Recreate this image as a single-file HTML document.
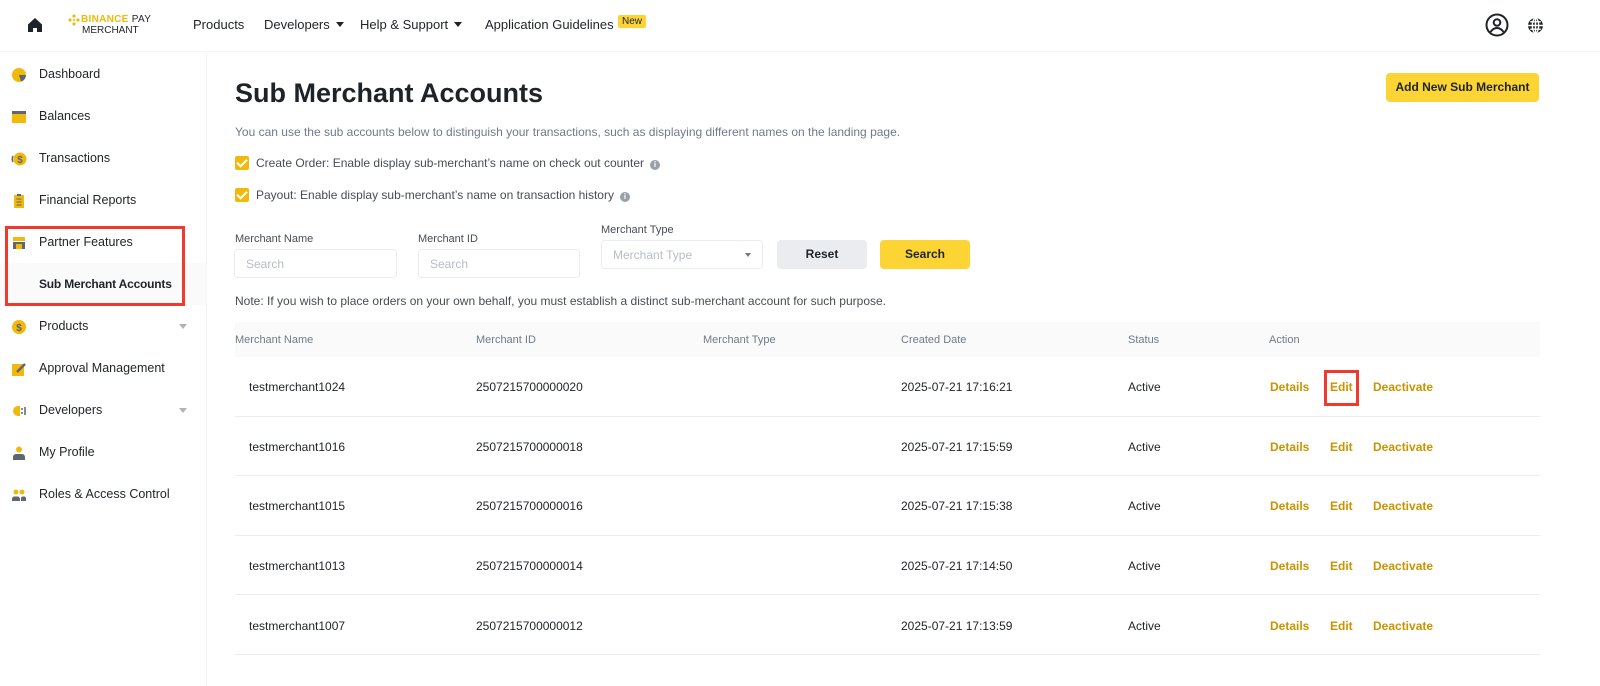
<!DOCTYPE html>
<html><head><meta charset="utf-8"><style>
*{box-sizing:border-box;margin:0;padding:0}
body{width:1600px;height:686px;overflow:hidden;background:#fff;font-family:"Liberation Sans",sans-serif;color:#1e2329;position:relative}
.abs{position:absolute}
.top{position:absolute;left:0;top:0;width:1600px;height:52px;border-bottom:1px solid #f2f3f5}
.nav{font-size:13px;color:#1e2329;top:17px;position:absolute}
.tri{display:inline-block;width:0;height:0;border-left:4px solid transparent;border-right:4px solid transparent;border-top:5px solid #1e2329;margin-left:6px;vertical-align:2px}
.side{position:absolute;left:0;top:53px;width:207px;height:633px;border-right:1px solid #f2f3f5}
.si{position:absolute;left:39px;font-size:12.5px;color:#1e2329}
.ic{position:absolute;left:11px;width:16px;height:16px}
.sarr{position:absolute;left:179px;border-left:4px solid transparent;border-right:4px solid transparent;border-top:5px solid #aeb4bc}
.t12{font-size:12px;color:#707a8a}
.lbl{font-size:11px;color:#474d57}
.inp{position:absolute;height:29px;border:1px solid #eaecef;border-radius:4px;font-size:12px;color:#b7bdc6;padding:7px 11px}
.cb{position:absolute;left:235px;width:14px;height:14px;background:#f0b90b;border-radius:2px}
.cb:after{content:"";position:absolute;left:4px;top:1px;width:4px;height:8px;border:solid #fff;border-width:0 2px 2px 0;transform:rotate(45deg)}
.info{display:inline-block;width:10px;height:10px;border-radius:50%;background:#9aa0a8;color:#fff;font-size:8px;text-align:center;line-height:10px;font-weight:bold;margin-left:6px;vertical-align:0}
.th{position:absolute;top:334px;font-size:11px;color:#707a8a}
.td{position:absolute;font-size:12px;color:#1e2329}
.act{position:absolute;font-size:12px;color:#c99400;font-weight:bold}
.line{position:absolute;left:235px;width:1305px;height:1px;background:#eaecef}
</style></head><body>
<div class="top">
 <svg class="abs" style="left:27px;top:17px" width="16" height="16" viewBox="0 0 16 16"><path d="M8 1L1 7.5V15h5v-4h4v4h5V7.5z" fill="#1e2329"/></svg>
 <svg class="abs" style="left:68px;top:14px" width="12" height="12" viewBox="0 0 12 12"><path d="M6 0l2 2-2 2-2-2zM2 4l2 2-2 2-2-2zM10 4l2 2-2 2-2-2zM6 8l2 2-2 2-2-2zM6 4.6l1.4 1.4L6 7.4 4.6 6z" fill="#f0b90b"/></svg>
 <div class="abs" style="left:81px;top:14px;font-size:10px;font-weight:bold;color:#f0b90b;letter-spacing:.3px">BINANCE <span style="color:#1e2329;font-weight:normal">PAY</span></div>
 <div class="abs" style="left:82px;top:25px;font-size:10px;color:#1e2329">MERCHANT</div>
 <div class="nav" style="left:193px">Products</div>
 <div class="nav" style="left:264px">Developers<span class="tri"></span></div>
 <div class="nav" style="left:360px">Help &amp; Support<span class="tri"></span></div>
 <div class="nav" style="left:485px">Application Guidelines</div>
 <div class="abs" style="left:618px;top:15px;background:#fcd535;font-size:10px;padding:1px 4px;border-radius:2px;color:#1e2329">New</div>
 <svg class="abs" style="left:1485px;top:13px" width="24" height="24" viewBox="0 0 24 24"><circle cx="12" cy="12" r="10.5" fill="none" stroke="#1e2329" stroke-width="2"/><circle cx="12" cy="9.5" r="3.3" fill="none" stroke="#1e2329" stroke-width="2"/><path d="M5.5 19c2-3 4-4 6.5-4s4.5 1 6.5 4" fill="none" stroke="#1e2329" stroke-width="2"/></svg>
 <svg class="abs" style="left:1527px;top:17px" width="17" height="17" viewBox="0 0 16 16"><circle cx="8" cy="8" r="7" fill="#1e2329"/><path d="M8 1v14M1 8h14M3 4.5h10M3 11.5h10" stroke="#fff" stroke-width="1.3"/><ellipse cx="8" cy="8" rx="3" ry="7" fill="none" stroke="#fff" stroke-width="1.3"/></svg>
</div>
<div class="side">
 <svg class="ic" style="top:14px" viewBox="0 0 16 16"><circle cx="8" cy="8" r="7" fill="#f0b90b"/><path d="M8 8L15 8A7 7 0 0 1 10 14.6z" fill="#5e6673"/></svg>
 <div class="si" style="top:14px">Dashboard</div>
 <svg class="ic" style="top:56px" viewBox="0 0 16 16"><rect x="1" y="2" width="14" height="12" fill="#f0b90b"/><rect x="1" y="2" width="14" height="3" fill="#5e6673"/></svg>
 <div class="si" style="top:56px">Balances</div>
 <svg class="ic" style="top:98px" viewBox="0 0 16 16"><circle cx="9" cy="8" r="6.5" fill="#f0b90b"/><text x="9" y="12" font-size="10" text-anchor="middle" fill="#5e6673" font-weight="bold" font-family="Liberation Sans">$</text><path d="M2 5a7 7 0 0 0 0 6" stroke="#5e6673" fill="none" stroke-width="1.5"/></svg>
 <div class="si" style="top:98px">Transactions</div>
 <svg class="ic" style="top:140px" viewBox="0 0 16 16"><rect x="3" y="2" width="10" height="13" fill="#f0b90b"/><rect x="6" y="1" width="4" height="2" fill="#5e6673"/><path d="M5.5 6h5M5.5 9h5M5.5 12h5" stroke="#5e6673"/></svg>
 <div class="si" style="top:140px">Financial Reports</div>
 <svg class="ic" style="top:182px" viewBox="0 0 16 16"><rect x="2" y="2" width="12" height="4" fill="#f0b90b"/><rect x="2" y="7" width="12" height="7" fill="#5e6673"/><rect x="5" y="9" width="6" height="5" fill="#f0b90b"/></svg>
 <div class="si" style="top:182px">Partner Features</div>
 <div class="abs" style="left:0;top:210px;width:207px;height:42px;background:#fafafa"></div>
 <div class="si" style="top:224px;font-weight:bold;font-size:12px;letter-spacing:-0.2px">Sub Merchant Accounts</div>
 <div class="abs" style="left:5px;top:173px;width:180px;height:80px;border:3px solid #f03a2e"></div>
 <svg class="ic" style="top:266px" viewBox="0 0 16 16"><circle cx="8" cy="8" r="7" fill="#f0b90b"/><text x="8" y="12" font-size="10" text-anchor="middle" fill="#5e6673" font-weight="bold" font-family="Liberation Sans">$</text></svg>
 <div class="si" style="top:266px">Products</div><div class="sarr" style="top:271px"></div>
 <svg class="ic" style="top:308px" viewBox="0 0 16 16"><rect x="1" y="3" width="12" height="12" fill="#f0b90b"/><path d="M6 11l8-8" stroke="#5e6673" stroke-width="2.5"/></svg>
 <div class="si" style="top:308px">Approval Management</div>
 <svg class="ic" style="top:350px" viewBox="0 0 16 16"><path d="M2 8a5 5 0 0 1 5-5h2v10H7a5 5 0 0 1-5-5z" fill="#f0b90b"/><path d="M10 6h2M10 10h2M14 4v8" stroke="#5e6673" stroke-width="1.5"/></svg>
 <div class="si" style="top:350px">Developers</div><div class="sarr" style="top:355px"></div>
 <svg class="ic" style="top:392px" viewBox="0 0 16 16"><circle cx="8" cy="4.5" r="3" fill="#f0b90b"/><path d="M2 15v-3a3 3 0 0 1 3-3h6a3 3 0 0 1 3 3v3z" fill="#5e6673"/></svg>
 <div class="si" style="top:392px">My Profile</div>
 <svg class="ic" style="top:434px" viewBox="0 0 16 16"><circle cx="5" cy="5" r="2.5" fill="#f0b90b"/><circle cx="11" cy="5" r="2.5" fill="#f0b90b"/><path d="M1 14v-2a2.5 2.5 0 0 1 2.5-2.5h3A2.5 2.5 0 0 1 9 12v2zM10 14v-2.5a2 2 0 0 1 2-2h1a2 2 0 0 1 2 2V14z" fill="#5e6673"/></svg>
 <div class="si" style="top:434px">Roles &amp; Access Control</div>
</div>

<div class="abs" style="left:235px;top:78px;font-size:27px;font-weight:bold">Sub Merchant Accounts</div>
<div class="abs" style="left:1386px;top:73px;width:153px;height:29px;background:#fcd535;border-radius:4px;font-size:12px;text-align:center;line-height:29px;font-weight:bold;color:#1e2329">Add New Sub Merchant</div>
<div class="abs t12" style="left:235px;top:125px">You can use the sub accounts below to distinguish your transactions, such as displaying different names on the landing page.</div>
<div class="cb" style="top:156px"></div>
<div class="abs t12" style="left:256px;top:156px;color:#474d57">Create Order: Enable display sub-merchant’s name on check out counter<span class="info">i</span></div>
<div class="cb" style="top:188px"></div>
<div class="abs t12" style="left:256px;top:188px;color:#474d57">Payout: Enable display sub-merchant’s name on transaction history<span class="info">i</span></div>

<div class="abs lbl" style="left:235px;top:233px">Merchant Name</div>
<div class="inp" style="left:234px;top:249px;width:163px">Search</div>
<div class="abs lbl" style="left:418px;top:233px">Merchant ID</div>
<div class="inp" style="left:418px;top:249px;width:162px">Search</div>
<div class="abs lbl" style="left:601px;top:224px">Merchant Type</div>
<div class="inp" style="left:601px;top:240px;width:162px">Merchant Type<span style="position:absolute;right:11px;top:12px;border-left:3px solid transparent;border-right:3px solid transparent;border-top:4px solid #707a8a"></span></div>
<div class="abs" style="left:777px;top:240px;width:90px;height:29px;background:#eaecef;border-radius:4px;font-size:12px;text-align:center;line-height:29px;font-weight:bold">Reset</div>
<div class="abs" style="left:880px;top:240px;width:90px;height:29px;background:#fcd535;border-radius:4px;font-size:12px;text-align:center;line-height:29px;font-weight:bold">Search</div>
<div class="abs t12" style="left:235px;top:294px;color:#474d57">Note: If you wish to place orders on your own behalf, you must establish a distinct sub-merchant account for such purpose.</div>

<div class="abs" style="left:235px;top:322px;width:1305px;height:35px;background:#fafafa"></div>
<div class="th" style="left:235px">Merchant Name</div>
<div class="th" style="left:476px">Merchant ID</div>
<div class="th" style="left:703px">Merchant Type</div>
<div class="th" style="left:901px">Created Date</div>
<div class="th" style="left:1128px">Status</div>
<div class="th" style="left:1269px">Action</div>

<div class="td" style="left:249px;top:380px">testmerchant1024</div><div class="td" style="left:476px;top:380px">2507215700000020</div><div class="td" style="left:901px;top:380px">2025-07-21 17:16:21</div><div class="td" style="left:1128px;top:380px">Active</div>
<div class="act" style="left:1270px;top:380px">Details</div><div class="act" style="left:1330px;top:380px">Edit</div><div class="act" style="left:1373px;top:380px">Deactivate</div>
<div class="abs" style="left:1324px;top:370px;width:35px;height:36px;border:3px solid #f03a2e"></div>
<div class="line" style="top:416px"></div>

<div class="td" style="left:249px;top:440px">testmerchant1016</div><div class="td" style="left:476px;top:440px">2507215700000018</div><div class="td" style="left:901px;top:440px">2025-07-21 17:15:59</div><div class="td" style="left:1128px;top:440px">Active</div>
<div class="act" style="left:1270px;top:440px">Details</div><div class="act" style="left:1330px;top:440px">Edit</div><div class="act" style="left:1373px;top:440px">Deactivate</div>
<div class="line" style="top:475px"></div>

<div class="td" style="left:249px;top:499px">testmerchant1015</div><div class="td" style="left:476px;top:499px">2507215700000016</div><div class="td" style="left:901px;top:499px">2025-07-21 17:15:38</div><div class="td" style="left:1128px;top:499px">Active</div>
<div class="act" style="left:1270px;top:499px">Details</div><div class="act" style="left:1330px;top:499px">Edit</div><div class="act" style="left:1373px;top:499px">Deactivate</div>
<div class="line" style="top:535px"></div>

<div class="td" style="left:249px;top:559px">testmerchant1013</div><div class="td" style="left:476px;top:559px">2507215700000014</div><div class="td" style="left:901px;top:559px">2025-07-21 17:14:50</div><div class="td" style="left:1128px;top:559px">Active</div>
<div class="act" style="left:1270px;top:559px">Details</div><div class="act" style="left:1330px;top:559px">Edit</div><div class="act" style="left:1373px;top:559px">Deactivate</div>
<div class="line" style="top:594px"></div>

<div class="td" style="left:249px;top:619px">testmerchant1007</div><div class="td" style="left:476px;top:619px">2507215700000012</div><div class="td" style="left:901px;top:619px">2025-07-21 17:13:59</div><div class="td" style="left:1128px;top:619px">Active</div>
<div class="act" style="left:1270px;top:619px">Details</div><div class="act" style="left:1330px;top:619px">Edit</div><div class="act" style="left:1373px;top:619px">Deactivate</div>
<div class="line" style="top:654px"></div>
</body></html>
